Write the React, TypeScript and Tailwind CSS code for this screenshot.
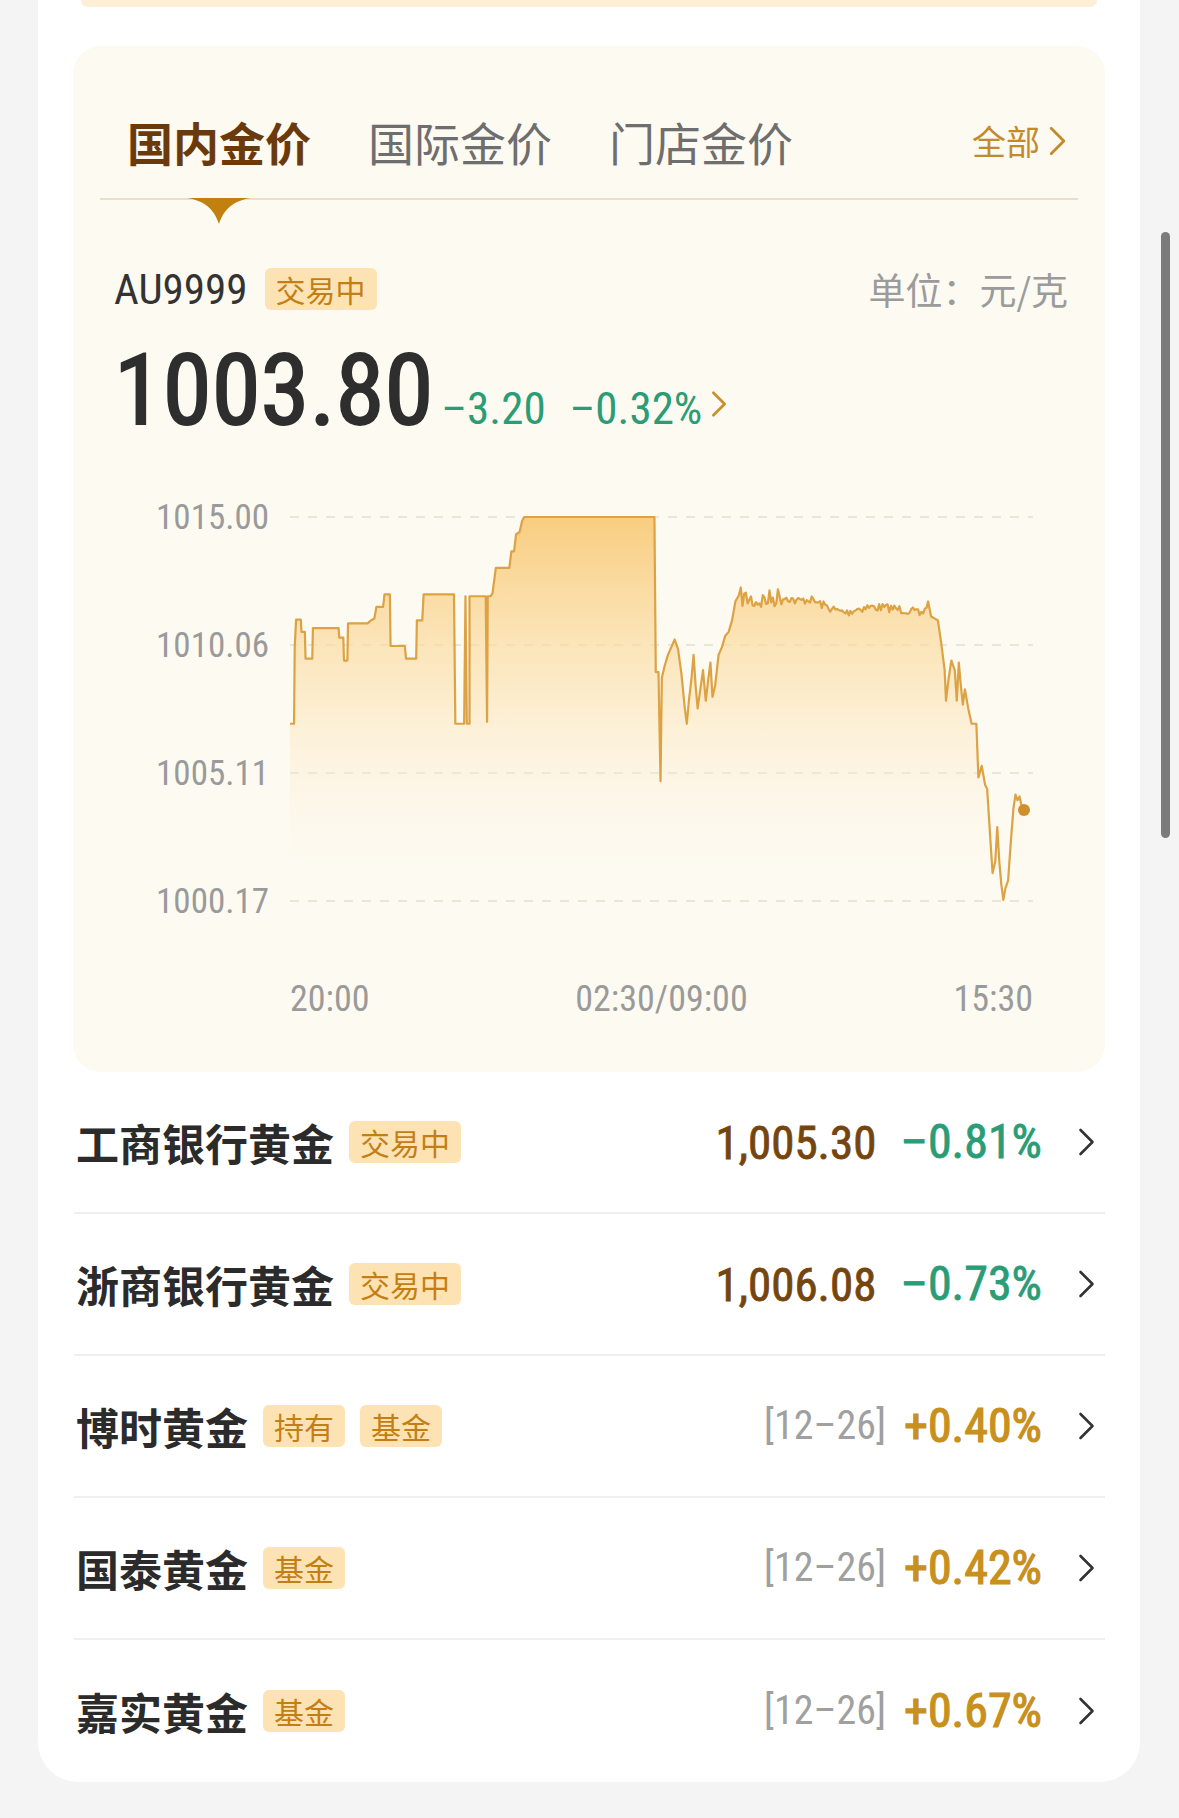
import React from 'react';

const NUM = "font-['Liberation_Sans_Narrow','Roboto_Condensed',Roboto,sans-serif]";
const CJK = "font-['Noto_Sans_CJK_SC',sans-serif]";

interface FundRow {
  name: string;
  tags: string[];
  price?: string;
  date?: string;
  pct: string;
  up: boolean;
}

const rows: FundRow[] = [
  { name: '工商银行黄金', tags: ['交易中'], price: '1,005.30', pct: '–0.81%', up: false },
  { name: '浙商银行黄金', tags: ['交易中'], price: '1,006.08', pct: '–0.73%', up: false },
  { name: '博时黄金', tags: ['持有', '基金'], date: '[12–26]', pct: '+0.40%', up: true },
  { name: '国泰黄金', tags: ['基金'], date: '[12–26]', pct: '+0.42%', up: true },
  { name: '嘉实黄金', tags: ['基金'], date: '[12–26]', pct: '+0.67%', up: true },
];

// chart points, in the same units as the svg viewBox
const head: [number, number][] = [
  [340, 740], [346, 740], [347, 540], [349, 468], [356, 468], [357, 500], [362, 500], [363, 570],
  [373, 570], [374, 490], [412, 490], [413, 515], [419, 515], [420, 575], [425, 575], [426, 478],
  [455, 478], [460, 470], [465, 465], [468, 435], [478, 435], [480, 402], [488, 402], [489, 537],
  [510, 537], [512, 570], [527, 570], [528, 470], [536, 470], [538, 402], [583, 402], [585, 740],
  [598, 740], [600, 407], [602, 740], [606, 740], [606, 407], [630, 407], [632, 735], [633, 407],
  [637, 407], [640, 400], [645, 333], [665, 333], [668, 290], [672, 290], [675, 245], [680, 240],
  [684, 210], [687, 200], [880, 200], [882, 605], [886, 605], [889, 890], [891, 620], [895, 590],
  [900, 560], [905, 540], [910, 520], [915, 545], [920, 610], [925, 700], [928, 740], [931, 680],
  [935, 620], [938, 560], [941, 640], [944, 700], [948, 650], [952, 600], [956, 680], [960, 620],
  [963, 580], [966, 670], [970, 640], [975, 560], [980, 540], [985, 510], [990, 500], [995, 470],
  [1000, 420], [1005, 405],
];

const mid: [number, number][] = [
  [1010, 410], [1030, 420], [1050, 415], [1070, 405], [1090, 420], [1110, 415], [1130, 430],
  [1150, 445], [1165, 450], [1180, 440], [1200, 435], [1230, 438], [1260, 445], [1275, 455], [1286, 425],
];

const tail: [number, number][] = [
  [1290, 460], [1300, 470], [1305, 530], [1310, 600], [1312, 680], [1316, 620], [1320, 575],
  [1325, 600], [1328, 680], [1331, 580], [1334, 640], [1337, 690], [1340, 650], [1345, 700],
  [1350, 740], [1357, 740], [1360, 880], [1365, 850], [1370, 900], [1373, 910], [1378, 1050],
  [1381, 1130], [1385, 1100], [1388, 1010], [1391, 1100], [1394, 1160], [1397, 1200], [1400, 1170],
  [1404, 1150], [1408, 1050], [1412, 960], [1415, 925], [1418, 940], [1421, 930], [1424, 955], [1427, 965],
];

function buildPoints() {
  let seed = 7;
  const rand = () => {
    seed = (seed * 16807) % 2147483647;
    return seed / 2147483647;
  };
  const pts: [number, number][] = [...head];
  for (let x = 1008; x < 1288; x += 2.5) {
    let i = 0;
    while (i < mid.length - 2 && mid[i + 1][0] < x) i++;
    const [x0, y0] = mid[i];
    const [x1, y1] = mid[i + 1];
    const t = Math.min(1, Math.max(0, (x - x0) / (x1 - x0)));
    const base = y0 + (y1 - y0) * t;
    const amp = x < 1075 ? 26 : 11;
    pts.push([x, base + (rand() - 0.5) * amp * 2]);
  }
  return pts.concat(tail);
}

const points = buildPoints();
const linePath = points.map(([x, y], i) => `${i ? 'L' : 'M'}${x},${y.toFixed(1)}`).join(' ');
const areaPath = `${linePath} L1427,1203 L340,1203 Z`;

function Chevron({ className, stroke, width = 2.6 }: { className: string; stroke: string; width?: number }) {
  return (
    <svg viewBox="0 0 18 30" className={className} fill="none">
      <polyline points="3,3 15,15 3,27" stroke={stroke} strokeWidth={width} strokeLinecap="round" strokeLinejoin="round" />
    </svg>
  );
}

function Tag({ label }: { label: string }) {
  return (
    <span className={`${CJK} flex h-[42px] items-center rounded-[6px] bg-[#fde3b3] px-[11px] text-[30px] leading-none text-[#c47f14]`}>
      {label}
    </span>
  );
}

function PriceChart() {
  const yLabels = ['1015.00', '1010.06', '1005.11', '1000.17'];
  return (
    <div className="relative mt-[57px]">
      <div className="flex flex-col gap-[88px]">
        {yLabels.map(l => (
          <div key={l} className="flex h-[40px] items-center gap-[21px] pr-[72px]">
            <span className={`${NUM} w-[196px] text-right text-[35px] leading-none text-[#9a9a9a]`}>{l}</span>
            <div className="h-[2px] flex-1 bg-[repeating-linear-gradient(to_right,#ece5d6_0_9px,transparent_9px_18px)]" />
          </div>
        ))}
      </div>
      <svg
        viewBox="340 200 1095 1003"
        preserveAspectRatio="none"
        className="absolute left-[217px] top-[20px] h-[384px] w-[739px] overflow-visible"
      >
        <defs>
          <linearGradient id="goldFill" gradientUnits="userSpaceOnUse" x1="0" y1="200" x2="0" y2="1150">
            <stop offset="0" stopColor="#f8c873" stopOpacity="0.9" />
            <stop offset="0.45" stopColor="#fbdfa9" stopOpacity="0.6" />
            <stop offset="1" stopColor="#fdf6e8" stopOpacity="0" />
          </linearGradient>
        </defs>
        <path d={areaPath} fill="url(#goldFill)" />
        <path d={linePath} fill="none" stroke="#dca244" strokeWidth="2.2" vectorEffect="non-scaling-stroke" strokeLinejoin="round" />
      </svg>
      <div className="absolute left-[945px] top-[307px] h-[12px] w-[12px] rounded-full bg-[#cf8f2c]" />
      <div className={`${NUM} mt-[58px] flex h-[40px] items-center justify-between pl-[217px] pr-[72px] text-[36px] leading-none text-[#9a9a9a]`}>
        <span>20:00</span>
        <span>02:30/09:00</span>
        <span>15:30</span>
      </div>
    </div>
  );
}

function GoldPanel() {
  return (
    <div className="mt-[39px] rounded-[28px] bg-[#fdfaf1] pb-[53px]">
      <div className="relative mx-[27px] flex items-center border-b-2 border-[#e8dfcb] pb-[34px] pl-[27px] pr-[11px] pt-[72px]">
        <span className={`${CJK} text-[46px] font-bold leading-[46px] text-[#6a3a0c]`}>国内金价</span>
        <span className={`${CJK} ml-[57px] text-[46px] leading-[46px] text-[#6e6e6e]`}>国际金价</span>
        <span className={`${CJK} ml-[57px] text-[46px] leading-[46px] text-[#6e6e6e]`}>门店金价</span>
        <span className="ml-auto flex items-center gap-[8px]">
          <span className={`${CJK} text-[34px] leading-none text-[#c38a2c]`}>全部</span>
          <Chevron className="h-[32px] w-[19px]" stroke="#c38a2c" />
        </span>
        <svg viewBox="0 0 64 26" className="absolute left-[87px] top-full h-[26px] w-[64px]">
          <path d="M0,0 L64,0 C46,3 37,11 32,26 C27,11 18,3 0,0 Z" fill="#c2800f" />
        </svg>
      </div>

      <div className="mt-[68px] flex h-[42px] items-center pl-[41px] pr-[37px]">
        <span className={`${NUM} text-[43px] leading-none text-[#333333]`}>AU9999</span>
        <span className="ml-[17px]">
          <Tag label="交易中" />
        </span>
        <span className={`${CJK} ml-auto text-[37px] leading-none text-[#9b9b9b]`}>单位：元/克</span>
      </div>

      <div className="mt-[30px] flex items-baseline pl-[41px]">
        <span className={`${NUM} text-[99px] leading-[100px] text-[#2e2e2e] [-webkit-text-stroke:2px_#2e2e2e]`}>1003.80</span>
        <span className={`${NUM} ml-[8px] text-[45px] leading-none text-[#2a9c76]`}>–3.20</span>
        <span className={`${NUM} ml-[24px] text-[45px] leading-none text-[#2a9c76]`}>–0.32%</span>
        <Chevron className="ml-[8px] h-[28px] w-[18px] self-center translate-y-[14px]" stroke="#c8912a" width={3} />
      </div>

      <PriceChart />
    </div>
  );
}

function FundItem({ row, last }: { row: FundRow; last: boolean }) {
  const pctColor = row.up
    ? 'ml-[18px] text-[#c8901c] [-webkit-text-stroke:1.2px_#c8901c]'
    : 'ml-[24px] text-[#2a9c76] [-webkit-text-stroke:0.8px_#2a9c76]';
  return (
    <div className={`flex h-[142px] items-center pl-[2px] pr-[9px] ${last ? '' : 'border-b-2 border-[#efefef]'}`}>
      <span className={`${CJK} text-[43px] font-bold leading-none text-[#2b2b2b]`}>{row.name}</span>
      <div className="ml-[15px] flex gap-[15px]">
        {row.tags.map(t => (
          <Tag key={t} label={t} />
        ))}
      </div>
      <div className="ml-auto flex items-center">
        {row.price && (
          <span className={`${NUM} text-[47px] leading-none text-[#74450f] [-webkit-text-stroke:0.8px_#74450f]`}>{row.price}</span>
        )}
        {row.date && <span className={`${NUM} text-[40px] leading-none text-[#a0a0a0]`}>{row.date}</span>}
        <span className={`${NUM} text-[48px] leading-none ${pctColor}`}>{row.pct}</span>
        <Chevron className="ml-[35px] h-[30px] w-[19px]" stroke="#333333" />
      </div>
    </div>
  );
}

export default function App() {
  return (
    <div className="relative h-[1818px] w-[1179px] overflow-hidden bg-[#f4f4f4]">
      <div className="ml-[38px] w-[1102px] rounded-b-[40px] bg-white px-[35px]">
        <div className="mx-[8px] h-[7px] rounded-b-[20px] bg-[#fdefd6]" />
        <GoldPanel />
        <div className="pl-[1px]">
          {rows.map((r, i) => (
            <FundItem key={r.name} row={r} last={i === rows.length - 1} />
          ))}
        </div>
      </div>
      <div className="absolute left-[1161px] top-[232px] h-[606px] w-[9px] rounded-full bg-[#7b7b7b]" />
    </div>
  );
}
